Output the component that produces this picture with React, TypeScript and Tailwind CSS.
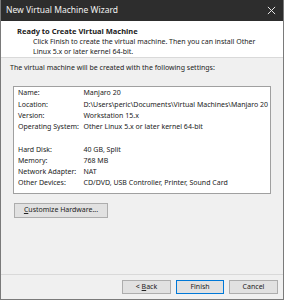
import React from 'react';

const rows: [string, string][] = [
  ['Name:', 'Manjaro 20'],
  ['Location:', 'D:\\Users\\peric\\Documents\\Virtual Machines\\Manjaro 20'],
  ['Version:', 'Workstation 15.x'],
  ['Operating System:', 'Other Linux 5.x or later kernel 64-bit'],
  ['', ''],
  ['Hard Disk:', '40 GB, Split'],
  ['Memory:', '768 MB'],
  ['Network Adapter:', 'NAT'],
  ['Other Devices:', 'CD/DVD, USB Controller, Printer, Sound Card'],
];

const WizardButton: React.FC<{ children: React.ReactNode; primary?: boolean; className?: string }> = ({
  children,
  primary,
  className = '',
}) => (
  <div
    className={`flex items-center justify-center bg-[#e1e1e1] border ${
      primary ? 'border-[#0078d7]' : 'border-[#adadad]'
    } text-[#222] ${className}`}
  >
    {children}
  </div>
);

export default function App() {
  return (
    <div
      className="w-[284px] h-[300px] flex flex-col bg-[#f0f0f0] border-x border-b border-[#7a7a7a] text-[7px] text-[#222] overflow-hidden"
      style={{ fontFamily: '"Noto Sans", sans-serif' }}
    >
      {/* title bar */}
      <div className="h-[21px] shrink-0 bg-[#2d2d2d] flex items-center justify-between pl-[5px] pr-[7px] text-[#f2f2f2] text-[8.5px]">
        <span>New Virtual Machine Wizard</span>
        <svg width="9" height="9" viewBox="0 0 10 10" stroke="#e8e8e8" strokeWidth="1.1">
          <path d="M1 1L9 9M9 1L1 9" />
        </svg>
      </div>

      {/* header */}
      <div className="h-[37px] shrink-0 bg-white border-b border-[#d9d9d9] pl-[16px] pt-[5px]">
        <div className="font-bold text-[7.5px] leading-[11px]">Ready to Create Virtual Machine</div>
        <div className="pl-[16px] leading-[9.5px]">
          Click Finish to create the virtual machine. Then you can install Other
          <br />
          Linux 5.x or later kernel 64-bit.
        </div>
      </div>

      {/* body */}
      <div className="flex-1 flex flex-col px-[12px]">
        <div className="mt-[4px] -ml-[3px] leading-[11px]">
          The virtual machine will be created with the following settings:
        </div>
        <div className="mt-[13px] h-[108px] bg-white border border-[#a0a0a0] pt-[1px] pl-[4px]">
          {rows.map(([k, v], i) => (
            <div key={i} className="flex h-[11.25px] items-center whitespace-nowrap">
              <span className="w-[65.5px] shrink-0">{k}</span>
              <span>{v}</span>
            </div>
          ))}
        </div>
        <WizardButton className="mt-[9px] w-[94px] h-[15px] ml-[1px]">
          <span>
            <span className="underline">C</span>ustomize Hardware...
          </span>
        </WizardButton>
      </div>

      {/* footer */}
      <div className="h-[25px] shrink-0 border-t border-[#d9d9d9] flex items-start justify-end gap-[5px] pt-[5px] pr-[5px]">
        <WizardButton className="w-[49px] h-[14px]">
          <span>
            &lt; <span className="underline">B</span>ack
          </span>
        </WizardButton>
        <WizardButton primary className="w-[48px] h-[14px]">
          Finish
        </WizardButton>
        <WizardButton className="w-[49px] h-[14px]">Cancel</WizardButton>
      </div>
    </div>
  );
}
